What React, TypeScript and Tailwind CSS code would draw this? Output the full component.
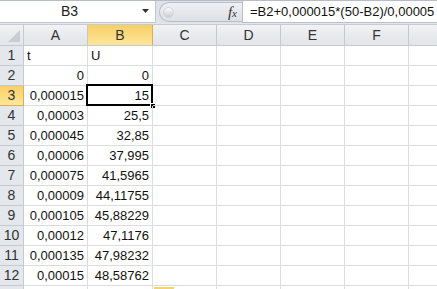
import React from "react";

const cols = ["A", "B", "C", "D", "E", "F", "G"];
const widths = [64, 65, 64, 64, 64, 64, 80];

const data: [string, string][] = [
  ["t", "U"],
  ["0", "0"],
  ["0,000015", "15"],
  ["0,00003", "25,5"],
  ["0,000045", "32,85"],
  ["0,00006", "37,995"],
  ["0,000075", "41,5965"],
  ["0,00009", "44,11755"],
  ["0,000105", "45,88229"],
  ["0,00012", "47,1176"],
  ["0,000135", "47,98232"],
  ["0,00015", "48,58762"],
  ["", ""],
];

export default function App() {
  const font = { fontFamily: '"Liberation Sans", Arial, sans-serif' };
  return (
    <div
      className="w-[437px] h-[289px] overflow-hidden bg-white relative text-[13px] text-[#111]"
      style={font}
    >
      {/* formula bar */}
      <div className="h-[23px] flex border-t border-[#b6bcc6] bg-[#dfe3e8]">
        <div className="w-[156px] shrink-0 bg-white border-b border-r border-[#c3c8cf] flex items-center pl-[61px] pr-[5px]">
          <span className="flex-1 text-[14px] text-[#222]">B3</span>
          <svg width="8" height="5" viewBox="0 0 8 5">
            <path d="M0 0 H7 L3.5 4 Z" fill="#333" />
          </svg>
        </div>
        <div className="w-[86px] shrink-0 flex items-center pl-[3px]">
          <div className="flex-1 h-[20px] rounded-l-[10px] border border-r-0 border-[#b8bec7] bg-gradient-to-b from-[#eef0f3] to-[#dcdfe4] flex items-center pl-[3px] pr-[5px]">
            <div className="w-[11px] h-[11px] rounded-full bg-gradient-to-b from-[#fbfbfc] to-[#c9cdd3] border border-[#d0d4da]" />
            <div className="flex-1" />
            <span
              className="text-[15px] italic text-[#333] leading-none"
              style={{ fontFamily: '"Liberation Serif", serif' }}
            >
              f<span className="text-[11px]">x</span>
            </span>
          </div>
        </div>
        <div className="flex-1 bg-white border-l border-b border-[#b8bec7] flex items-center pl-[7px] overflow-hidden">
          <span className="text-[13px] whitespace-nowrap text-[#111]">
            =B2+0,000015*(50-B2)/0,00005
          </span>
        </div>
      </div>
      <div className="h-[2px] bg-[#e3e6ea] border-b border-[#c7ccd3]" />

      {/* header row */}
      <div className="flex h-[21px] border-b border-[#c6cad0]">
        <div className="w-[24px] shrink-0 border-r border-[#c6cad0] bg-gradient-to-b from-[#f0f2f4] to-[#e2e5e9] flex items-end justify-end p-[3px]">
          <svg width="12" height="12" viewBox="0 0 12 12">
            <path d="M12 0 V12 H0 Z" fill="#c9ccd1" />
          </svg>
        </div>
        {cols.map((c, i) => (
          <div
            key={c}
            style={{ width: widths[i] }}
            className={
              "shrink-0 border-r flex items-center justify-center text-[14px] " +
              (c === "B"
                ? "bg-gradient-to-b from-[#f8cf65] to-[#fee79a] border-[#e2ac4c] text-[#333]"
                : "bg-gradient-to-b from-[#f0f2f4] to-[#e2e5e9] border-[#c6cad0] text-[#333]")
            }
          >
            {c}
          </div>
        ))}
      </div>

      {/* rows */}
      {data.map((row, r) => {
        const n = r + 1;
        const sel = n === 3;
        return (
          <div key={n} className="flex h-[20px]">
            <div
              className={
                "w-[24px] shrink-0 border-r border-b flex items-center justify-center text-[14px] text-[#333] " +
                (sel
                  ? "bg-gradient-to-b from-[#f8cf65] to-[#fee79a] border-[#e2ac4c]"
                  : "bg-[#e4e7eb] border-[#c6cad0]")
              }
            >
              {n}
            </div>
            {cols.map((c, i) => {
              const v = i === 0 ? row[0] : i === 1 ? row[1] : "";
              const left = n === 1;
              return (
                <div
                  key={c}
                  style={{ width: widths[i] }}
                  className={
                    "shrink-0 border-r border-b border-[#dadcdd] flex items-center px-[3px] relative " +
                    (left ? "justify-start" : "justify-end")
                  }
                >
                  {v}
                  {sel && c === "B" && (
                    <>
                      <div className="absolute left-[-2px] top-[-2px] right-[-1px] bottom-[-1px] border-2 border-black pointer-events-none" />
                      <div className="absolute right-[-4px] bottom-[-4px] w-[6px] h-[6px] bg-black border border-white" />
                    </>
                  )}
                  {n === 13 && c === "C" && (
                    <div className="absolute left-[1px] top-[1px] w-[20px] h-[2px] bg-[#f5d36b]" />
                  )}
                </div>
              );
            })}
          </div>
        );
      })}
    </div>
  );
}
